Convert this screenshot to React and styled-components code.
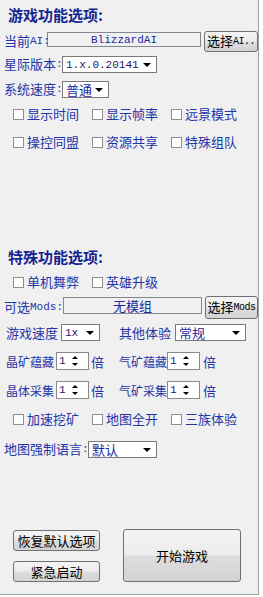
import React from 'react';
import styled, {createGlobalStyle} from 'styled-components';

const GlobalStyle = createGlobalStyle`
    body {
        margin: 0;
        background: #ffffff;
        font-family: "Noto Sans CJK SC", "Liberation Sans", sans-serif;
    }
`;

const Panel = styled.div`
    width: 259px;
    height: 595px;
    box-sizing: border-box;
    background: #f0f0f0;
    border-right: 1px solid #a0a0a0;
    border-bottom: 1px solid #a0a0a0;
    padding: 6px 0 0 4px;
    display: flex;
    flex-direction: column;
`;

const Title = styled.div`
    margin-top: ${({top}) => top || 0}px;
    margin-left: 4px;
    height: 18px;
    line-height: 18px;
    font-size: 15px;
    font-weight: 700;
    color: #17248f;
`;

const Row = styled.div`
    display: flex;
    align-items: ${({align}) => align || 'center'};
    margin-top: ${({top}) => top || 0}px;
    height: ${({h}) => h || 17}px;
`;

const Label = styled.span`
    font-size: ${({small}) => (small ? 12 : 13)}px;
    line-height: 17px;
    color: #1f35a8;
    white-space: nowrap;
    width: ${({w}) => (w ? `${w}px` : 'auto')};
    margin-left: ${({ml}) => ml || 0}px;
    flex-shrink: 0;

    .mono {
        font-family: "Liberation Mono", monospace;
        font-size: 11px;
        position: relative;
        top: -2px;
    }
`;

const Field = styled.div`
    box-sizing: border-box;
    width: ${({w}) => w}px;
    height: ${({h}) => h || 17}px;
    margin-top: ${({mt}) => mt || 0}px;
    border: 1px solid #828790;
    background: #f0f0f0;
    font-family: "Liberation Mono", monospace;
    font-size: 11px;
    color: #1a2a9c;
    display: flex;
    align-items: center;
    justify-content: center;
`;

const ModsText = styled.span`
    font-family: "Noto Sans CJK SC", sans-serif;
    font-size: 13px;
`;

const Button = styled.button`
    box-sizing: border-box;
    width: ${({w}) => w}px;
    height: ${({h}) => h}px;
    line-height: ${({h}) => h - 3}px;
    margin-left: ${({ml}) => ml || 0}px;
    padding: 0;
    border: 1px solid #707070;
    border-radius: 3px;
    background: linear-gradient(#f4f4f4, #ececec 48%, #dddddd 52%, #d3d3d3);
    font-family: "Noto Sans CJK SC", sans-serif;
    font-size: 13px;
    color: #000;
    cursor: pointer;
    white-space: nowrap;
    flex-shrink: 0;
    text-align: center;

    .mono {
        font-family: "Liberation Mono", monospace;
        font-size: 10px;
        letter-spacing: -0.5px;
        position: relative;
        top: -2px;
    }
`;

const SelectBox = styled.div`
    box-sizing: border-box;
    width: ${({w}) => w}px;
    height: 17px;
    margin-left: ${({ml}) => ml || 0}px;
    border: 1px solid #7a7a7a;
    background: #fff;
    display: flex;
    align-items: center;
    padding-left: 3px;
    font-size: 13px;
    color: #1a2a9c;
    position: relative;
    flex-shrink: 0;

    .mono {
        font-family: "Liberation Mono", monospace;
        font-size: 11px;
        color: #1a1a6a;
    }

    &::after {
        content: '';
        position: absolute;
        right: 5px;
        top: 6px;
        border-left: 4px solid transparent;
        border-right: 4px solid transparent;
        border-top: 4px solid #000;
    }
`;

const Spinner = styled.div`
    box-sizing: border-box;
    width: 33px;
    height: 18px;
    border: 1px solid #8a8a8a;
    background: #fff;
    display: flex;
    align-items: center;
    padding-left: 2px;
    font-family: "Liberation Mono", monospace;
    font-size: 11px;
    color: #1a1a6a;
    position: relative;
    flex-shrink: 0;

    &::before, &::after {
        content: '';
        position: absolute;
        right: 10px;
        border-left: 3px solid transparent;
        border-right: 3px solid transparent;
    }
    &::before {
        top: 3px;
        border-bottom: 3px solid #000;
    }
    &::after {
        bottom: 3px;
        border-top: 3px solid #000;
    }
`;

const CheckRow = styled.div`
    display: flex;
    margin-top: ${({top}) => top || 0}px;
    margin-left: 9px;
    height: 16px;
`;

const Check = styled.label`
    width: 79px;
    display: flex;
    align-items: center;
    font-size: 13px;
    line-height: 16px;
    color: #1f35a8;
    white-space: nowrap;

    &::before {
        content: '';
        box-sizing: border-box;
        width: 11px;
        height: 11px;
        border: 1px solid #8e8f8f;
        background: #fff;
        margin-right: 3px;
        flex-shrink: 0;
    }
`;

const Bottom = styled.div`
    display: flex;
    margin-top: 71px;
    margin-left: 9px;
`;

const LeftButtons = styled.div`
    display: flex;
    flex-direction: column;
    gap: 10px;
    padding-top: 1px;
`;

const gameChecks = [['显示时间', '显示帧率', '远景模式'], ['操控同盟', '资源共享', '特殊组队']];

const App = () => {
    return (
        <Panel>
            <GlobalStyle />
            <Title>游戏功能选项:</Title>

            <Row top={7} h={21} align="flex-start">
                <Label w={43} style={{marginTop: 1}}>当前<span className="mono">AI:</span></Label>
                <Field w={155} h={15} mt={1}>BlizzardAI</Field>
                <Button w={54} h={21} ml={3}>选择<span className="mono">AI..</span></Button>
            </Row>
            <Row top={4}>
                <Label w={58}>星际版本<span className="mono">:</span></Label>
                <SelectBox w={95}><span className="mono">1.x.0.20141</span></SelectBox>
            </Row>
            <Row top={8}>
                <Label w={58}>系统速度<span className="mono">:</span></Label>
                <SelectBox w={47}>普通</SelectBox>
            </Row>

            {gameChecks.map((row, i) => (
                <CheckRow key={i} top={i === 0 ? 8 : 12}>
                    {row.map((item) => <Check key={item}>{item}</Check>)}
                </CheckRow>
            ))}

            <Title top={98}>特殊功能选项:</Title>
            <CheckRow top={8}>
                <Check>单机舞弊</Check>
                <Check>英雄升级</Check>
            </CheckRow>

            <Row top={6} h={23} align="flex-start">
                <Label w={59} style={{marginTop: 2}}>可选<span className="mono">Mods:</span></Label>
                <Field w={139} h={17} mt={1}><ModsText>无模组</ModsText></Field>
                <Button w={53} h={23} ml={3}>选择<span className="mono">Mods</span></Button>
            </Row>
            <Row top={5}>
                <Label w={55} ml={2}>游戏速度</Label>
                <SelectBox w={39}><span className="mono">1x</span></SelectBox>
                <Label w={56} ml={19}>其他体验</Label>
                <SelectBox w={71}>常规</SelectBox>
            </Row>
            <Row top={11} h={18}>
                <Label small w={50} ml={2}>晶矿蕴藏</Label>
                <Spinner>1</Spinner>
                <Label w={28} ml={2}>倍</Label>
                <Label small w={48}>气矿蕴藏</Label>
                <Spinner>1</Spinner>
                <Label ml={3}>倍</Label>
            </Row>
            <Row top={11} h={18}>
                <Label small w={50} ml={2}>晶体采集</Label>
                <Spinner>1</Spinner>
                <Label w={28} ml={2}>倍</Label>
                <Label small w={48}>气矿采集</Label>
                <Spinner>1</Spinner>
                <Label ml={3}>倍</Label>
            </Row>
            <CheckRow top={12}>
                <Check>加速挖矿</Check>
                <Check>地图全开</Check>
                <Check>三族体验</Check>
            </CheckRow>
            <Row top={14}>
                <Label w={84}>地图强制语言<span className="mono">:</span></Label>
                <SelectBox w={69}>默认</SelectBox>
            </Row>

            <Bottom>
                <LeftButtons>
                    <Button w={87} h={21}>恢复默认选项</Button>
                    <Button w={87} h={21}>紧急启动</Button>
                </LeftButtons>
                <Button w={118} h={53} ml={23}>开始游戏</Button>
            </Bottom>
        </Panel>
    );
};

export default App;
